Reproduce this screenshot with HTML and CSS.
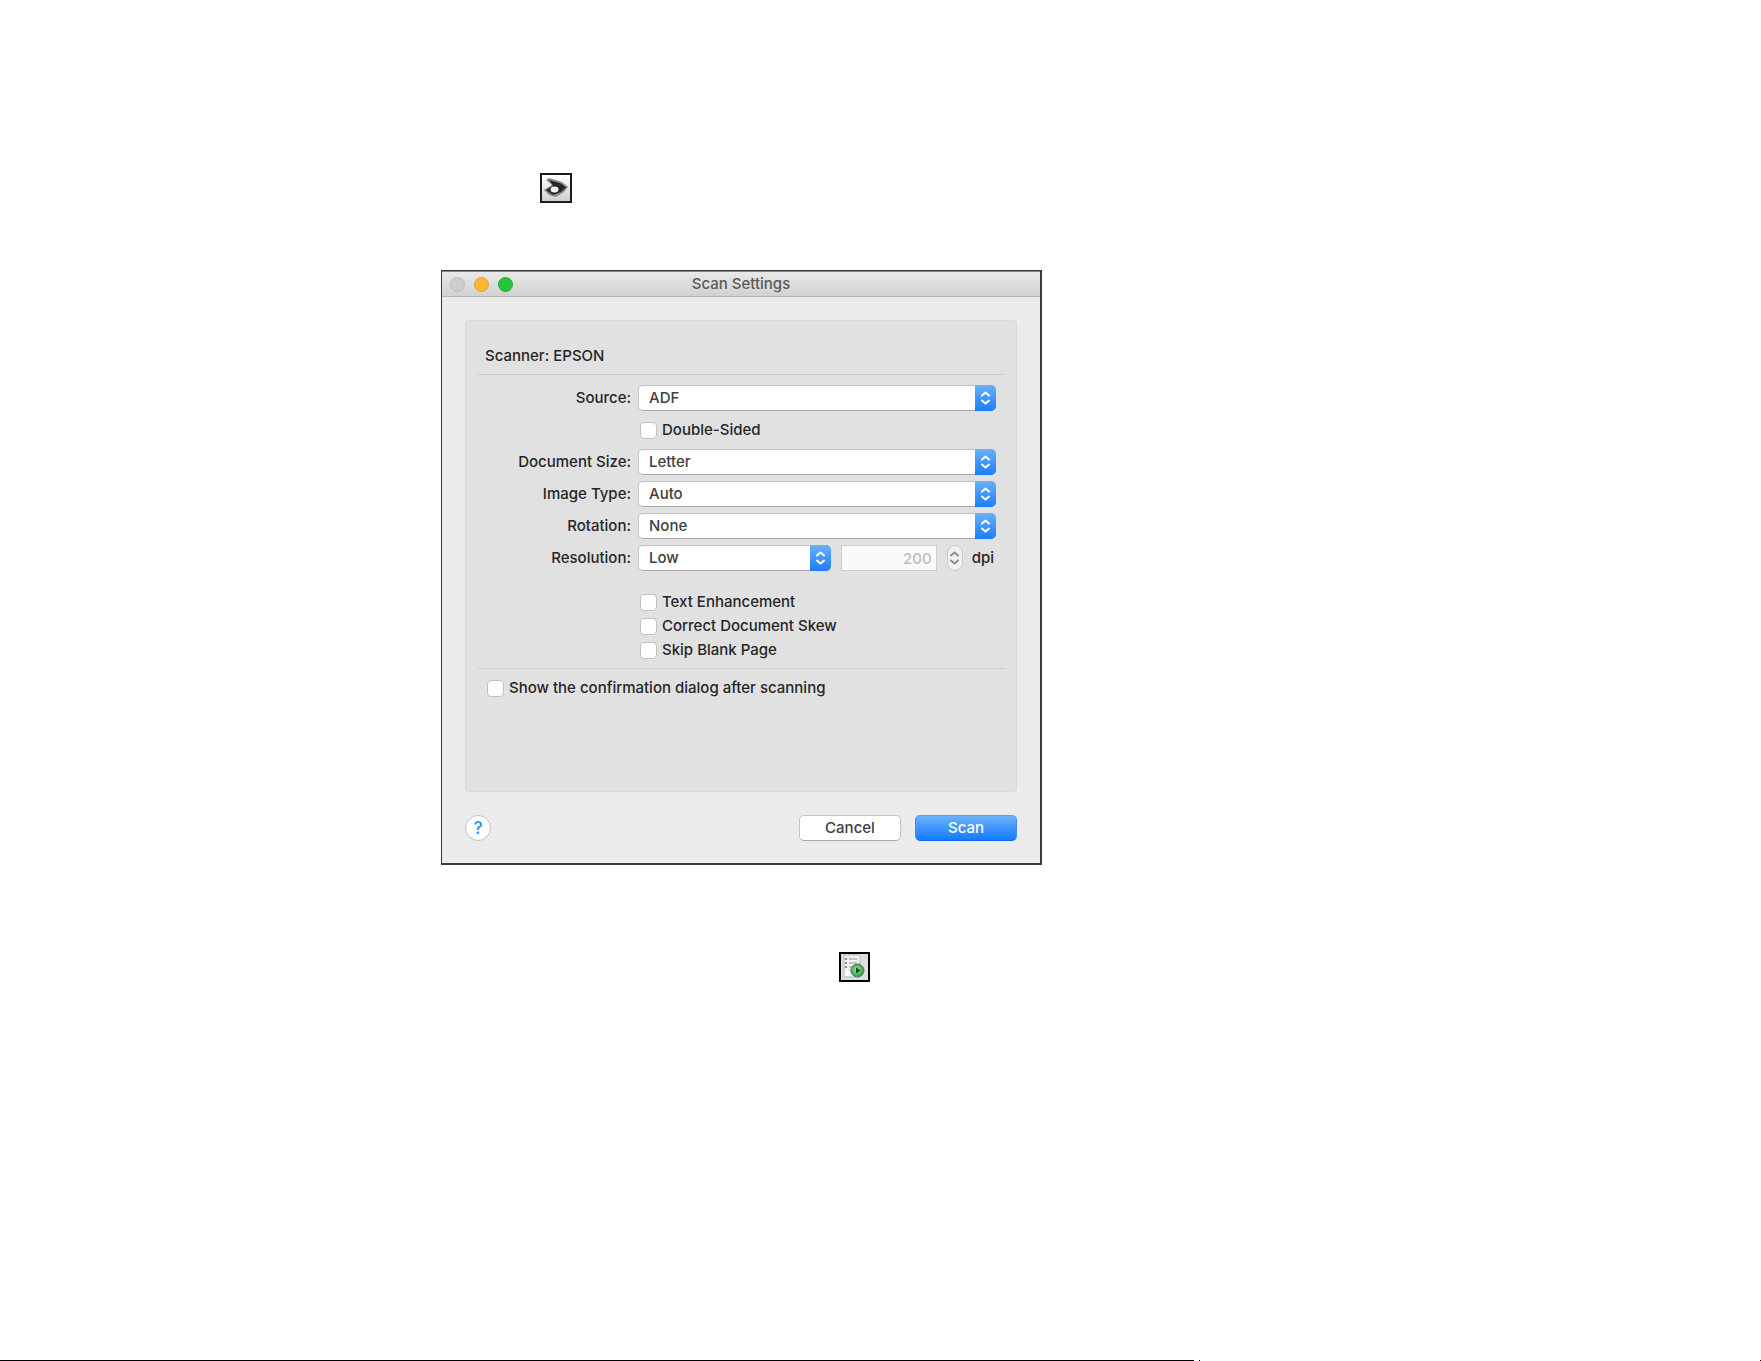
FILE: index.html
```
<!DOCTYPE html>
<html lang="en">
<head>
  <meta charset="utf-8">
  <title>Scan Settings</title>
  <meta name="viewport" content="width=device-width, initial-scale=1.0">
  <link rel="stylesheet" href="styles.css">
</head>
<body>
  <svg class="symbols" aria-hidden="true">
    <symbol id="arrows" viewBox="0 0 21 26">
      <path d="M7 10.5 L10.5 7.5 L14 10.5 M7 15.5 L10.5 18.5 L14 15.5" fill="none" stroke="currentColor" stroke-width="2" stroke-linecap="round" stroke-linejoin="round"/>
    </symbol>
  </svg>

  <main class="page">
    <div class="scan-icon">
      <svg width="32" height="30" viewBox="0 0 32 30">
        <defs>
          <linearGradient id="tile" x1="0" y1="0" x2="0" y2="1">
            <stop offset="0" stop-color="#fff"/>
            <stop offset="1" stop-color="#cfcfcf"/>
          </linearGradient>
          <filter id="soft">
            <feGaussianBlur stdDeviation="0.7"/>
          </filter>
        </defs>
        <rect width="32" height="30" fill="#1c1c1c"/>
        <rect x="2" y="2" width="28" height="26" fill="url(#tile)"/>
        <g filter="url(#soft)">
          <path d="M4 17 L12 12 L6 7 L9 5 L22 9 L28 14 L24 19 L16 24 L9 22 Z" fill="#8a8a8a"/>
          <path d="M6 17 L13 12.500 L9 7 L21 10.500 L26 14.500 L21 19 L13 22 Z" fill="#262626"/>
          <ellipse cx="14.500" cy="16.500" rx="4" ry="3" fill="#f4f4f4"/>
        </g>
      </svg>
    </div>

    <form class="dialog">
      <header class="titlebar">
        <div class="lights">
          <span class="light"></span>
          <span class="light light-yellow"></span>
          <span class="light light-green"></span>
        </div>
        <h1>Scan Settings</h1>
      </header>

      <div class="content">
        <section class="panel">
          <h2>Scanner: EPSON</h2>

          <div class="settings">
            <label for="source">Source:</label>
            <div class="popup">
              <select id="source"><option>ADF</option></select>
              <svg><use href="#arrows"/></svg>
            </div>

            <label class="check control"><input type="checkbox">Double-Sided</label>

            <label for="docSize">Document Size:</label>
            <div class="popup">
              <select id="docSize"><option>Letter</option></select>
              <svg><use href="#arrows"/></svg>
            </div>

            <label for="imageType">Image Type:</label>
            <div class="popup">
              <select id="imageType"><option>Auto</option></select>
              <svg><use href="#arrows"/></svg>
            </div>

            <label for="rotation">Rotation:</label>
            <div class="popup">
              <select id="rotation"><option>None</option></select>
              <svg><use href="#arrows"/></svg>
            </div>

            <label for="resolution">Resolution:</label>
            <div class="resolution">
              <div class="popup">
                <select id="resolution"><option>Low</option></select>
                <svg><use href="#arrows"/></svg>
              </div>
              <input class="dpi" id="dpi" type="text" value="200" disabled>
              <button class="stepper" type="button" aria-label="Change dpi" disabled>
                <svg><use href="#arrows"/></svg>
              </button>
              <label for="dpi">dpi</label>
            </div>

            <div class="options control">
              <label class="check"><input type="checkbox">Text Enhancement</label>
              <label class="check"><input type="checkbox">Correct Document Skew</label>
              <label class="check"><input type="checkbox">Skip Blank Page</label>
            </div>
          </div>

          <div class="confirm">
            <label class="check"><input type="checkbox">Show the confirmation dialog after scanning</label>
          </div>
        </section>

        <footer class="actions">
          <button class="help" type="button">?</button>
          <button class="btn" type="button">Cancel</button>
          <button class="btn btn-primary" type="button">Scan</button>
        </footer>
      </div>
    </form>

    <div class="job-icon">
      <svg width="31" height="30" viewBox="0 0 31 30">
        <defs>
          <radialGradient id="play" cx="0.45" cy="0.45" r="0.6">
            <stop offset="0" stop-color="#a5e6ac"/>
            <stop offset="1" stop-color="#2a8a3a"/>
          </radialGradient>
        </defs>
        <rect width="31" height="30" fill="#000"/>
        <rect x="2" y="2" width="27" height="26" fill="#dedede"/>
        <path d="M5 3 H21 V25 H5 Z" fill="#f1f1f1" stroke="#bbb"/>
        <path d="M10 7 H18 M10 11 H18 M10 15 H15 M10 19 H12" stroke="#b0b0b0" stroke-width="1.500"/>
        <path d="M6 7 H8 M6 11 H8 M6 15 H8" stroke="#8a8a8a" stroke-width="2"/>
        <path d="M6 19 H11 V24 H6 Z" fill="#fff"/>
        <circle cx="18.500" cy="18.500" r="6.500" fill="url(#play)" stroke="#3f8d4c"/>
        <path d="M17 15.500 L21.500 18.500 L17 21.500 Z" fill="#0c4a18"/>
      </svg>
    </div>
  </main>

  <div class="page-rule">
    <span class="line"></span>
    <span class="dot"></span>
    <span class="dot dot-end"></span>
  </div>
</body>
</html>
```
FILE: styles.css
```
* {
  box-sizing: border-box;
}

body {
  display: flex;
  flex-direction: column;
  min-height: 100vh;
  margin: 0;
  background: #fff;
  color: #262626;
  font-family: Inter, "Liberation Sans", sans-serif;
  font-size: 15px;
  font-weight: 500;
  line-height: 20px;
}

svg {
  display: block;
}

.symbols {
  position: absolute;
  width: 0;
  height: 0;
}

.page {
  width: 100%;
  max-width: 1042px;
  padding-top: 173px;
  padding-left: 441px;
}

.scan-icon {
  padding-left: 99px;
  margin-bottom: 67px;
}

.job-icon {
  padding-left: 398px;
  margin-top: 87px;
}

.dialog {
  background: #ebebeb;
  border: 1px solid #3a3a3c;
  border-width: 1px 2px 2px 1px;
}

.titlebar {
  display: grid;
  grid-template-columns: 1fr auto 1fr;
  align-items: center;
  height: 26px;
  padding: 0 8px;
  background: linear-gradient(#e9e9e9, #d1d1d1);
  border-top: 1px solid #858585;
  border-bottom: 1px solid #b5b5b5;
}

.lights {
  display: flex;
  gap: 9px;
}

.light {
  width: 15px;
  height: 15px;
  background: #cecece;
  border: 1px solid #b9b9b9;
  border-radius: 50%;
}

.light-yellow {
  background: #fdb62f;
  border-color: #e5a133;
}

.light-green {
  background: #27c33c;
  border-color: #24ad35;
}

h1 {
  margin: 0;
  color: #5a5a5a;
  font-size: 15px;
  font-weight: 500;
}

.content {
  padding: 23px 23px 22px;
}

.panel {
  min-height: 472px;
  padding: 25px 11px;
  background: #e1e1e1;
  border: 1px solid #d9d9d9;
  border-radius: 4px;
}

h2 {
  margin: 0 0 10px;
  padding: 0 0 8px 8px;
  border-bottom: 1px solid #cecece;
  font-size: 15px;
  font-weight: 500;
}

.settings {
  display: grid;
  grid-template-columns: 154px 1fr;
  align-items: center;
  gap: 6px 7px;
  padding-right: 9px;
}

.settings > label {
  text-align: right;
}

.settings .control {
  grid-column: 2;
}

.popup {
  position: relative;
}

.popup select {
  display: block;
  width: 100%;
  height: 26px;
  padding: 0 30px 0 10px;
  appearance: none;
  background: #fff;
  border: 1px solid #c4c4c4;
  border-bottom-color: #a9a9a9;
  border-radius: 5px;
  color: #404040;
  font: inherit;
}

/* blue cap on the right end of the select */
.popup svg {
  position: absolute;
  top: 0;
  right: 0;
  width: 21px;
  height: 26px;
  background: linear-gradient(#6bb0f8, #1a7dfc);
  border-radius: 0 5px 5px 0;
  color: #fff;
  pointer-events: none;
}

.resolution {
  display: flex;
  align-items: center;
}

.resolution .popup {
  flex: 1;
}

.dpi {
  width: 96px;
  height: 26px;
  margin: 0 10px;
  padding: 0 4px;
  background: #fafafa;
  border: 1px solid #cdcdcd;
  color: #bdbdbd;
  font: inherit;
  text-align: right;
}

.stepper {
  display: flex;
  justify-content: center;
  align-items: center;
  width: 16px;
  height: 26px;
  margin-right: 9px;
  padding: 0;
  background: #f0f0f0;
  border: 1px solid #c9c9c9;
  border-radius: 8px;
  color: #8e8e8e;
}

.stepper svg {
  flex: none;
  width: 21px;
  height: 26px;
}

.resolution label {
  padding-right: 2px;
}

.check {
  display: flex;
  align-items: center;
  height: 24px;
}

.check input {
  width: 17px;
  height: 17px;
  margin: 0 5px 0 2px;
  appearance: none;
  background: #fff;
  border: 1px solid #c0c0c0;
  border-radius: 4px;
}

.settings > .check {
  height: 26px;
}

.options {
  padding-top: 13px;
}

.confirm {
  margin-top: 6px;
  padding: 7px 0 0 8px;
  border-top: 1px solid #cecece;
}

.actions {
  display: flex;
  align-items: center;
  gap: 14px;
  padding-top: 23px;
}

.help {
  width: 26px;
  height: 26px;
  margin-right: auto;
  padding: 0;
  background: #fff;
  border: 1px solid #c2c2c2;
  border-radius: 50%;
  color: #3b99fc;
  font: inherit;
  font-size: 17px;
  font-weight: 600;
}

.btn {
  width: 102px;
  height: 26px;
  padding: 0;
  background: #fff;
  border: 1px solid #c4c4c4;
  border-bottom-color: #a9a9a9;
  border-radius: 5px;
  color: #404040;
  font: inherit;
}

.btn-primary {
  background: linear-gradient(#6bb3fa, #147aff);
  border-color: #55a1f5 #3a8ff8 #0a6afb;
  color: #fff;
}

.page-rule {
  display: flex;
  gap: 5px;
  height: 1px;
  margin-top: auto;
}

.line {
  width: 67.8%;
  background: #000;
}

.dot {
  width: 1px;
  background: #000;
}

.dot-end {
  margin-left: auto;
}
```
